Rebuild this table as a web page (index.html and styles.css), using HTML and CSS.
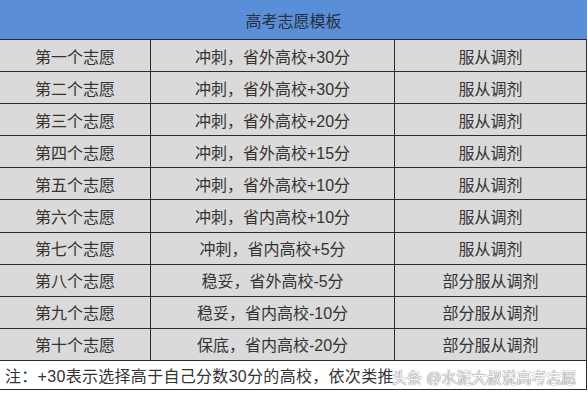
FILE: index.html
```html
<!DOCTYPE html>
<html lang="zh-CN">
<head>
<meta charset="utf-8">
<title>高考志愿模板</title>
<link rel="stylesheet" href="styles.css">
</head>
<body>
<div class="sheet">
  <div class="title">高考志愿模板</div>
  <div class="row"><div class="cell">第一个志愿</div><div class="cell">冲刺，省外高校+30分</div><div class="cell">服从调剂</div></div>
  <div class="row"><div class="cell">第二个志愿</div><div class="cell">冲刺，省外高校+30分</div><div class="cell">服从调剂</div></div>
  <div class="row"><div class="cell">第三个志愿</div><div class="cell">冲刺，省外高校+20分</div><div class="cell">服从调剂</div></div>
  <div class="row"><div class="cell">第四个志愿</div><div class="cell">冲刺，省外高校+15分</div><div class="cell">服从调剂</div></div>
  <div class="row"><div class="cell">第五个志愿</div><div class="cell">冲刺，省外高校+10分</div><div class="cell">服从调剂</div></div>
  <div class="row"><div class="cell">第六个志愿</div><div class="cell">冲刺，省内高校+10分</div><div class="cell">服从调剂</div></div>
  <div class="row"><div class="cell">第七个志愿</div><div class="cell">冲刺，省内高校+5分</div><div class="cell">服从调剂</div></div>
  <div class="row"><div class="cell">第八个志愿</div><div class="cell">稳妥，省外高校-5分</div><div class="cell">部分服从调剂</div></div>
  <div class="row"><div class="cell">第九个志愿</div><div class="cell">稳妥，省内高校-10分</div><div class="cell">部分服从调剂</div></div>
  <div class="row"><div class="cell">第十个志愿</div><div class="cell">保底，省内高校-20分</div><div class="cell">部分服从调剂</div></div>
  <div class="note">
    <span class="note-text">注：+30表示选择高于自己分数30分的高校，依次类推</span>
    <span class="watermark">头条 @水泥大叔说高考志愿</span>
  </div>
</div>
</body>
</html>
```

FILE: styles.css
```css
html, body {
  margin: 0;
  padding: 0;
  background: #ffffff;
}

body {
  font-family: "Liberation Sans", "Noto Sans CJK SC", sans-serif;
  font-size: 16px;
  color: #333333;
}

.sheet {
  width: 587px;
  position: relative;
}

.title {
  background: #5a8ed8;
  border-bottom: 1.5px solid #2c2c2c;
  display: flex;
  align-items: center;
  justify-content: center;
  color: #27303d;
  padding-top: 1px;
  height: 38px;
}

.row {
  display: grid;
  grid-template-columns: 151px 244px 1fr;
  height: 31.1px;
  background: #dadada;
  border-bottom: 1.5px solid #2c2c2c;
  border-right: 1.5px solid #2c2c2c;
}

.cell {
  display: flex;
  align-items: center;
  justify-content: center;
  border-right: 1.5px solid #2c2c2c;
  white-space: nowrap;
}

.cell:last-child {
  border-right: none;
}

.note {
  height: 28px;
  border-bottom: 1.5px solid #2c2c2c;
  border-right: 1.5px solid #2c2c2c;
  display: flex;
  align-items: center;
  padding-left: 5px;
  position: relative;
  white-space: nowrap;
}

.note-text {
  color: #333333;
  letter-spacing: 0.3px;
}

.watermark {
  position: absolute;
  left: 392px;
  top: 5px;
  font-size: 15px;
  color: #fafafa;
  text-shadow: 0 0 1px #6a6a6a, 0 0 1px #6a6a6a;
  white-space: nowrap;
}
```
